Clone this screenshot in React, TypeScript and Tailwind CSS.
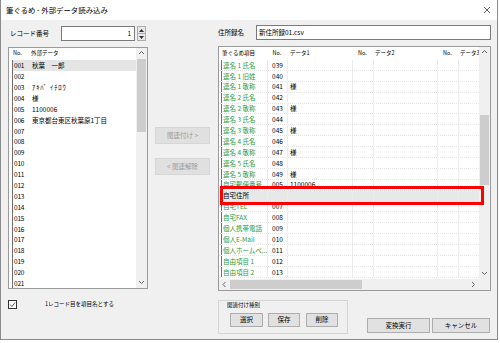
import React from 'react';

// 外部データ読み込みダイアログ

const leftRows: [string, string][] = [
  ['001', '秋葉　一郎'],
  ['002', ''],
  ['003', 'ｱｷﾊﾞ ｲﾁﾛｳ'],
  ['004', '様'],
  ['005', '1100006'],
  ['006', '東京都台東区秋葉原1丁目'],
  ...Array.from({ length: 15 }, (_, i): [string, string] => [String(i + 7).padStart(3, '0'), '']),
];

const gridRows: { name: string; no: string; data: string; sel?: boolean }[] = [
  { name: '連名 1 氏名', no: '039', data: '' },
  { name: '連名 1 旧姓', no: '040', data: '' },
  { name: '連名 1 敬称', no: '041', data: '様' },
  { name: '連名 2 氏名', no: '042', data: '' },
  { name: '連名 2 敬称', no: '043', data: '様' },
  { name: '連名 3 氏名', no: '044', data: '' },
  { name: '連名 3 敬称', no: '045', data: '様' },
  { name: '連名 4 氏名', no: '046', data: '' },
  { name: '連名 4 敬称', no: '047', data: '様' },
  { name: '連名 5 氏名', no: '048', data: '' },
  { name: '連名 5 敬称', no: '049', data: '様' },
  { name: '自宅郵便番号', no: '005', data: '1100006' },
  { name: '自宅住所', no: '', data: '', sel: true },
  { name: '自宅TEL', no: '007', data: '' },
  { name: '自宅FAX', no: '008', data: '' },
  { name: '個人携帯電話', no: '009', data: '' },
  { name: '個人E-Mail', no: '010', data: '' },
  { name: '個人ホームペ...', no: '011', data: '' },
  { name: '自由項目 1', no: '012', data: '' },
  { name: '自由項目 2', no: '013', data: '' },
];

function Chevron({ dir }: { dir: 'up' | 'down' | 'left' | 'right' }) {
  const d = {
    up: 'M1 4 L3.5 1.5 L6 4',
    down: 'M1 2 L3.5 4.5 L6 2',
    left: 'M4.5 1 L2 3.5 L4.5 6',
    right: 'M2 1 L4.5 3.5 L2 6',
  }[dir];
  return (
    <svg width="7" height="7" viewBox="0 0 7 7">
      <path d={d} fill="none" stroke="#606060" strokeWidth="1" />
    </svg>
  );
}

function Btn({ label, className, disabled }: { label: string; className: string; disabled?: boolean }) {
  return (
    <div
      className={`flex items-center justify-center text-[6.5px] ${
        disabled
          ? 'bg-[#e0e0e0] border border-[#d6d6d6] text-[#9a9a9a]'
          : 'bg-[#e1e1e1] border border-[#adadad] text-black'
      } ${className}`}
    >
      {label}
    </div>
  );
}

function VScroll({ thumbTop, thumbH, h }: { thumbTop: number; thumbH: number; h: string }) {
  return (
    <div className={`w-[11px] bg-[#f0f0f0] flex flex-col ${h}`}>
      <div className="h-[11px] flex items-center justify-center"><Chevron dir="up" /></div>
      <div className="flex-1 relative">
        <div className="absolute left-[1px] right-[1px] bg-[#cdcdcd]" style={{ top: thumbTop, height: thumbH }} />
      </div>
      <div className="h-[11px] flex items-center justify-center"><Chevron dir="down" /></div>
    </div>
  );
}

export default function App() {
  return (
    <div className="w-[500px] h-[343px] bg-white font-['Noto_Sans_CJK_JP','Noto_Sans',sans-serif] text-black leading-none">
      <div className="w-[498px] h-[340px] flex flex-col border border-t-0 border-[#8a8a8a]">
        {/* title bar */}
        <div className="h-[20px] bg-white flex items-center justify-between pl-[5px] pr-[6px]">
          <span className="text-[7.4px]">筆ぐるめ - 外部データ読み込み</span>
          <svg width="8" height="8" viewBox="0 0 8 8">
            <path d="M1 1 L7 7 M7 1 L1 7" stroke="#333" strokeWidth="0.8" />
          </svg>
        </div>

        <div className="flex-1 bg-[#f0f0f0] flex pl-[7px] pr-[6px]">
          {/* left column */}
          <div className="w-[140px] flex flex-col">
            <div className="mt-[6px] h-[15px] flex items-center">
              <span className="text-[6.5px] w-[53px] pl-[2px]">レコード番号</span>
              <div className="w-[74px] h-[15px] bg-white border border-[#7a7a7a] flex items-center justify-end pr-[3px] text-[6.5px]">1</div>
              <div className="ml-[2px] w-[9px] h-[15px] flex flex-col border border-[#adadad] bg-[#e8e8e8]">
                <div className="flex-1 flex items-center justify-center border-b border-[#adadad]">
                  <svg width="5" height="3" viewBox="0 0 5 3"><path d="M0 3 L2.5 0 L5 3Z" fill="#333" /></svg>
                </div>
                <div className="flex-1 flex items-center justify-center">
                  <svg width="5" height="3" viewBox="0 0 5 3"><path d="M0 0 L2.5 3 L5 0Z" fill="#333" /></svg>
                </div>
              </div>
            </div>

            <div className="mt-[6px] h-[242px] bg-white border border-[#9a9a9a] flex overflow-hidden">
              <div className="flex-1 flex flex-col overflow-hidden">
                <div className="h-[12px] flex items-center text-[5.5px] shrink-0">
                  <span className="w-[22px] pl-[4px]">No.</span>
                  <span>外部データ</span>
                </div>
                {leftRows.map(([no, data], i) => (
                  <div
                    key={no}
                    className={`h-[10.9px] shrink-0 flex items-center ml-[3px] border-l border-[#707070] text-[6.5px] ${
                      i === 0 ? 'bg-[#e5e5e5]' : ''
                    }`}
                  >
                    <span className="w-[19px] pl-[1px] tracking-[-0.2px]">{no}</span>
                    <span className={`whitespace-nowrap ${i === 2 ? 'tracking-[0.9px]' : ''}`}>{data}</span>
                  </div>
                ))}
              </div>
              <VScroll thumbTop={0} thumbH={73} h="h-[240px]" />
            </div>

            <div className="mt-[11px] flex items-center">
              <div className="w-[9px] h-[9px] border border-[#333] bg-white flex items-center justify-center">
                <svg width="7" height="7" viewBox="0 0 7 7"><path d="M1 3.5 L3 5.5 L6 1.5" fill="none" stroke="#333" strokeWidth="0.8" /></svg>
              </div>
              <span className="ml-[28px] text-[5.5px]">1レコード目を項目名とする</span>
            </div>
          </div>

          {/* middle column */}
          <div className="w-[55px] ml-[7px] flex flex-col">
            <Btn label="関連付け >" disabled className="mt-[107px] h-[17px]" />
            <Btn label="< 関連解除" disabled className="mt-[14px] h-[17px]" />
          </div>

          {/* right column */}
          <div className="w-[273px] ml-[8px] flex flex-col">
            <div className="mt-[5px] h-[15px] flex items-center">
              <span className="w-[38px] text-[6.5px]">住所録名</span>
              <div className="flex-1 h-[15px] bg-white border border-[#7a7a7a] flex items-center pl-[2px] text-[6.5px]">新住所録01.csv</div>
            </div>

            <div className="relative mt-[6px] h-[245px] bg-white border border-[#9a9a9a] flex flex-col overflow-hidden">
              <div className="flex flex-1 overflow-hidden">
                <div className="w-[260px] flex flex-col overflow-hidden">
                  <div className="h-[13px] shrink-0 flex items-center text-[5.5px]">
                    <span className="w-[48px] pl-[3px]">筆ぐるめ項目</span>
                    <span className="w-[20px] text-center">No.</span>
                    <span className="w-[65px] pl-[3px]">データ1</span>
                    <span className="w-[21px] text-center">No.</span>
                    <span className="w-[64px] pl-[2px]">データ2</span>
                    <span className="w-[21px] text-center">No.</span>
                    <span className="w-[21px] pl-[2px] whitespace-nowrap">データ3</span>
                  </div>
                  {gridRows.map((r) => (
                    <div
                      key={r.name}
                      className={`h-[10.9px] shrink-0 flex text-[6.5px] border-b border-dotted border-[#e6e6e6] ${
                        r.sel ? 'bg-[#e8e8e8]' : ''
                      }`}
                    >
                      <span
                        className={`w-[48px] flex items-center ml-[2px] pl-[1px] border-l border-[#707070] whitespace-nowrap overflow-hidden ${
                          r.sel ? 'text-black' : 'text-[#2a9a3c]'
                        }`}
                      >
                        {r.name}
                      </span>
                      <span className="w-[20px] -ml-[2px] flex items-center justify-center border-l border-[#ececec]">{r.no}</span>
                      <span className="w-[65px] flex items-center pl-[2px] border-l border-[#ececec]">{r.data}</span>
                      <span className="w-[21px] border-l border-[#ececec]" />
                      <span className="w-[64px] border-l border-[#ececec]" />
                      <span className="w-[21px] border-l border-[#ececec]" />
                      <span className="w-[21px] border-l border-[#ececec]" />
                    </div>
                  ))}
                </div>
                <VScroll thumbTop={57} thumbH={70} h="h-[232px]" />
              </div>
              <div className="h-[11px] shrink-0 flex bg-[#f0f0f0]">
                <div className="w-[11px] flex items-center justify-center"><Chevron dir="left" /></div>
                <div className="w-[238px] relative">
                  <div className="absolute top-[1px] bottom-[1px] left-0 w-[132px] bg-[#cdcdcd]" />
                </div>
                <div className="w-[11px] flex items-center justify-center"><Chevron dir="right" /></div>
                <div className="w-[11px]" />
              </div>
              {/* annotation */}
              <div className="absolute left-[1px] top-[139px] w-[264px] h-[19px] border-[3px] border-[#ff0000]" />
            </div>

            <div className="mt-[9px] flex">
              <div className="w-[130px] h-[34px] border border-[#d5d5d5] flex flex-col">
                <span className="text-[5.5px] pl-[8px] mt-[2px]">関連付け種別</span>
                <div className="flex mt-[4px] pl-[11px]">
                  <Btn label="選択" className="w-[33px] h-[14px]" />
                  <Btn label="保存" className="w-[32px] h-[14px] ml-[5px]" />
                  <Btn label="削除" className="w-[32px] h-[14px] ml-[6px]" />
                </div>
              </div>
              <div className="flex items-end pb-[1px] ml-[19px]">
                <Btn label="変換実行" className="w-[63px] h-[15px]" />
                <Btn label="キャンセル" className="w-[58px] h-[15px] ml-[2px]" />
              </div>
            </div>
          </div>
        </div>
      </div>
    </div>
  );
}
